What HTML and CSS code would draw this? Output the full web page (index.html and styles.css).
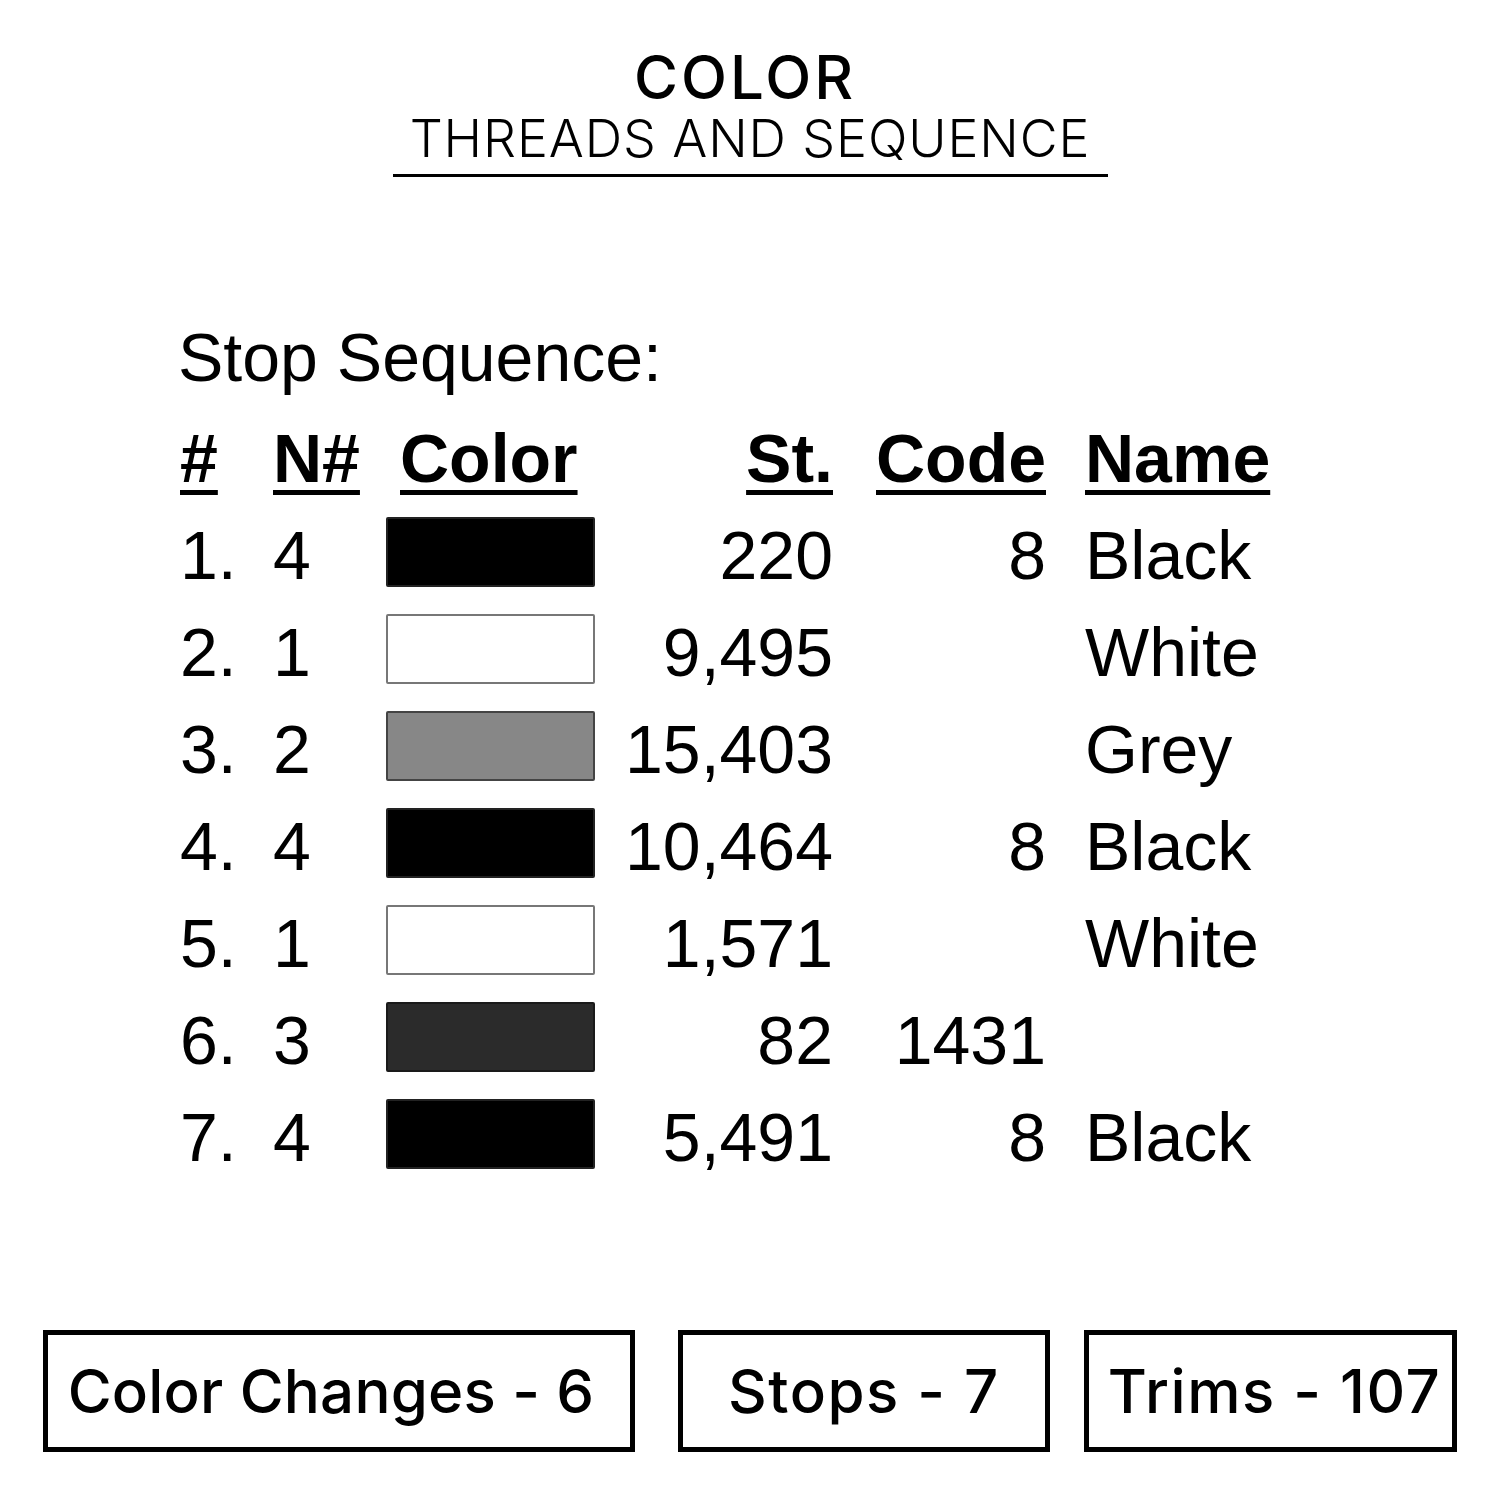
FILE: index.html
```html
<!DOCTYPE html>
<html>
<head>
<meta charset="utf-8">
<link rel="stylesheet" href="styles.css">
</head>
<body>
<div class="page">
  <header class="title">
    <div class="title-main">COLOR</div>
    <div class="title-sub">THREADS AND SEQUENCE</div>
  </header>

  <section class="seq">
    <div class="seq-heading">Stop Sequence:</div>
    <div class="grid">
      <div class="h c-num"><span>#</span></div>
      <div class="h c-n"><span>N#</span></div>
      <div class="h c-color"><span>Color</span></div>
      <div class="h c-st"><span>St.</span></div>
      <div class="h c-code"><span>Code</span></div>
      <div class="h c-name"><span>Name</span></div>

      <div class="c-num">1.</div><div class="c-n">4</div><div class="c-color"><div class="sw sw-black"></div></div><div class="c-st">220</div><div class="c-code">8</div><div class="c-name">Black</div>
      <div class="c-num">2.</div><div class="c-n">1</div><div class="c-color"><div class="sw sw-white"></div></div><div class="c-st">9,495</div><div class="c-code"></div><div class="c-name">White</div>
      <div class="c-num">3.</div><div class="c-n">2</div><div class="c-color"><div class="sw sw-grey"></div></div><div class="c-st">15,403</div><div class="c-code"></div><div class="c-name">Grey</div>
      <div class="c-num">4.</div><div class="c-n">4</div><div class="c-color"><div class="sw sw-black"></div></div><div class="c-st">10,464</div><div class="c-code">8</div><div class="c-name">Black</div>
      <div class="c-num">5.</div><div class="c-n">1</div><div class="c-color"><div class="sw sw-white"></div></div><div class="c-st">1,571</div><div class="c-code"></div><div class="c-name">White</div>
      <div class="c-num">6.</div><div class="c-n">3</div><div class="c-color"><div class="sw sw-dark"></div></div><div class="c-st">82</div><div class="c-code">1431</div><div class="c-name"></div>
      <div class="c-num">7.</div><div class="c-n">4</div><div class="c-color"><div class="sw sw-black"></div></div><div class="c-st">5,491</div><div class="c-code">8</div><div class="c-name">Black</div>
    </div>
  </section>

  <footer class="stats">
    <div class="box box-wide">Color Changes - 6</div>
    <div class="box box-mid">Stops - 7</div>
    <div class="box box-last">Trims - 107</div>
  </footer>
</div>
</body>
</html>
```

FILE: styles.css
```css
html, body {
  margin: 0;
  padding: 0;
  background: #ffffff;
}
.page {
  width: 1500px;
  height: 1500px;
  position: relative;
  color: #000;
}
.title {
  display: flex;
  flex-direction: column;
  align-items: center;
  padding-top: 44px;
  font-family: Inter, "Open Sans", sans-serif;
}
.title-main {
  font-size: 60px;
  line-height: 66px;
  font-weight: 500;
  letter-spacing: 3px;
  padding-right: 10px;
}
.title-sub {
  font-size: 52px;
  line-height: 58px;
  font-weight: 300;
  letter-spacing: 0.9px;
  width: 715px;
  text-align: center;
  border-bottom: 3px solid #000;
  padding-bottom: 6px;
}
.seq {
  font-family: "Liberation Sans", Arial, sans-serif;
  font-size: 68px;
  padding-left: 178px;
  margin-top: 140px;
}
.seq-heading {
  line-height: 80px;
}
.grid {
  display: grid;
  grid-template-columns: 95px 113px 209px 238px 213px 300px;
  grid-auto-rows: 97px;
  line-height: 97px;
  margin-top: 13px;
}
.h {
  font-weight: bold;
}
.h span {
  text-decoration: underline;
  text-decoration-thickness: 5px;
  text-underline-offset: 8px;
}
.c-num { padding-left: 2px; }
.c-color {
  display: flex;
  align-items: center;
}
.h.c-color { display: block; padding-left: 14px; }
.c-st, .c-code { text-align: right; }
.c-name { padding-left: 39px; }
.sw {
  width: 209px;
  height: 70px;
  box-sizing: border-box;
  border: 2px solid #555;
  border-radius: 2px;
  margin-top: -7px;
}
.sw-black { background: #000; border-color: #222; }
.sw-white { background: #fff; border-color: #777; }
.sw-grey { background: #878787; border-color: #444; }
.sw-dark { background: #2b2b2b; border-color: #1a1a1a; }
.stats {
  position: absolute;
  left: 43px;
  top: 1330px;
  display: flex;
  font-family: Inter, "Open Sans", sans-serif;
  font-weight: 500;
  font-size: 60px;
}
.box {
  box-sizing: border-box;
  height: 122px;
  border: 5px solid #000;
  display: flex;
  align-items: center;
  justify-content: center;
  white-space: nowrap;
}
.box-wide { width: 592px; letter-spacing: 0.2px; padding-right: 16px; }
.box-mid { width: 372px; margin-left: 43px; letter-spacing: 1.5px; }
.box-last { width: 373px; margin-left: 34px; letter-spacing: 1.5px; padding-left: 8px; }
```
